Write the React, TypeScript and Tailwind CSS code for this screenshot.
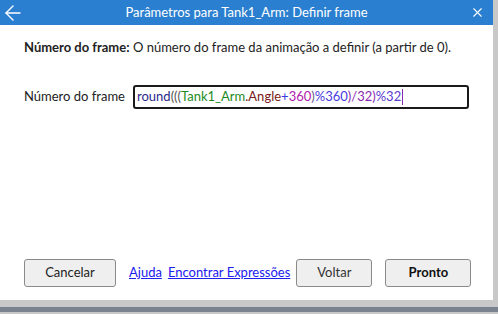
import { ArrowLeft, X } from "lucide-react";

const font = { fontFamily: 'Lato, "Noto Sans", sans-serif' };

export default function App() {
  return (
    <div className="flex h-[314px] w-[498px] flex-col bg-[#c8c8c8]" style={font}>
      <div className="flex flex-1">
        <div className="flex w-[493px] flex-col bg-white">
          <div className="flex h-[25px] items-center bg-[#2b7fd0] px-[1px] text-white">
            <div className="w-[27px]">
              <ArrowLeft size={24} strokeWidth={1.4} />
            </div>
            <span className="flex-1 text-center text-[13px]">Parâmetros para Tank1_Arm: Definir frame</span>
            <div className="flex w-[27px] justify-end">
              <X size={15} strokeWidth={1.8} className="mr-[7px]" />
            </div>
          </div>
          <div className="flex flex-1 flex-col whitespace-nowrap px-[24px] text-[13px] text-[#222]">
            <p className="mt-[13px]">
              <span className="font-bold">Número do frame:</span> O número do frame da animação a definir (a partir de 0).
            </p>
            <div className="mt-[27px] flex items-center">
              <span className="w-[109px] shrink-0">Número do frame</span>
              <div className="flex h-[24px] w-[336px] shrink-0 items-center rounded-[3px] border-2 border-[#1a1a1a] px-[2px]">
                <span className="text-[#2a2a8c]">round</span>
                <span className="text-[#555]">(((</span>
                <span className="text-[#1e8a1e]">Tank1_Arm</span>
                <span className="text-[#7a1a1a]">.Angle</span>
                <span className="text-[#3838e0]">+</span>
                <span className="text-[#b020b0]">360</span>
                <span className="text-[#6a5a8a]">)</span>
                <span className="text-[#4a3ae0]">%360</span>
                <span className="text-[#8a2ab0]">)/32)</span>
                <span className="text-[#5a3ad0]">%32</span>
                <span className="ml-px h-[16px] w-px bg-[#8a2ab0]" />
              </div>
            </div>
            <div className="mt-auto mb-[13px] flex items-center">
              <button className="h-[28px] w-[92px] shrink-0 rounded-[3px] border border-[#8a8a8a] bg-[#efefef] text-[#222]">
                Cancelar
              </button>
              <a className="ml-[13px] text-[#2020ee] underline">Ajuda</a>
              <a className="ml-[6px] text-[#2020ee] underline">Encontrar Expressões</a>
              <button className="ml-[6px] h-[28px] w-[76px] shrink-0 rounded-[3px] border border-[#8a8a8a] bg-[#efefef] text-[#333]">
                Voltar
              </button>
              <button className="ml-[13px] h-[28px] w-[86px] shrink-0 rounded-[3px] border border-[#8a8a8a] bg-[#efefef] font-bold text-[#111]">
                Pronto
              </button>
            </div>
          </div>
        </div>
      </div>
      <div className="h-[7px]" />
      <div className="h-[5px] bg-[#7a8290]" />
      <div className="h-[2px]" />
    </div>
  );
}
